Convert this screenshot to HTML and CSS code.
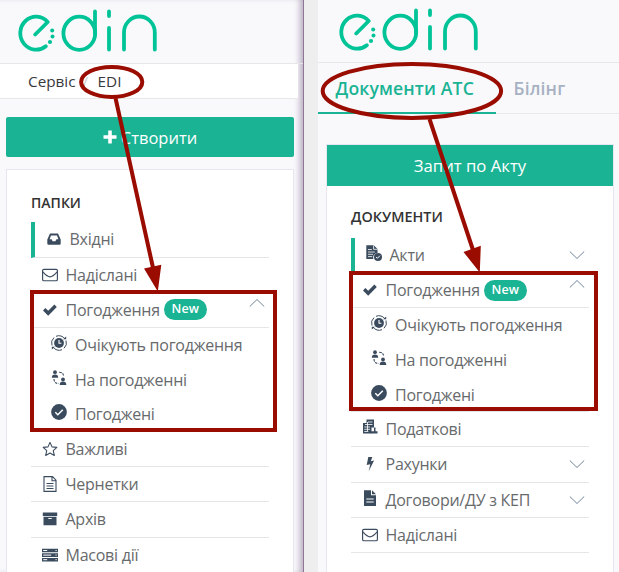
FILE: index.html
```html
<!DOCTYPE html>
<html lang="uk">
<head>
<meta charset="utf-8">
<title>EDIN</title>
<link rel="stylesheet" href="styles.css">
</head>
<body>
<svg class="defs" width="0" height="0">
  <symbol id="logo" viewBox="0 0 140 46">
    <g fill="none" stroke="#00c497" stroke-width="3.8" stroke-linecap="round" stroke-linejoin="round">
      <path d="M17.2 26.5 29.7 14A15.8 16.5 0 1 0 27.8 38.2"/>
      <ellipse cx="61.3" cy="25.3" rx="15.9" ry="16.6"/>
      <path d="M77 3.5V26M91 3.5V8M91 20V41.5M106 41.5V24.5A15.4 16 0 0 1 136.8 24.5V41.5"/>
    </g>
    <g fill="#00c497"><circle cx="34.2" cy="22.5" r="2"/><circle cx="34.5" cy="28.5" r="2"/><circle cx="32" cy="34" r="2.1"/></g>
  </symbol>
  <symbol id="inbox" viewBox="0 0 16 16"><path fill-rule="evenodd" d="M4 2.5h8l2.7 6v4q0 1.2-1.2 1.2h-11q-1.2 0-1.2-1.2v-4zM5 4.5 3.6 8.3h2l1 2h2.800l1-2h2L11 4.500z"/></symbol>
  <symbol id="mail" viewBox="0 0 16 16"><g fill="none" stroke="currentColor" stroke-width="1.15"><rect x=".6" y="2.3" width="14.8" height="11.4" rx="1.3"/><path d="M.8 4.8C3 7.200 5.500 9.800 8 9.800S13 7.200 15.200 4.800"/></g></symbol>
  <symbol id="check" viewBox="0 0 16 16"><path d="m1 8.400 2.400-2.400 2.800 2.800 6.200-6.200 2.400 2.400-8.600 8.700z"/></symbol>
  <symbol id="clock" viewBox="0 0 16 16"><circle cx="8" cy="8" r="4.900"/><path d="M8 5v3.200h2.400" fill="none" stroke="#fff" stroke-width="1.100"/><path d="M1 10.500A7.300 7.300 0 0 1 3 2.600M5 1.300A7.300 7.300 0 0 1 14 4M15 5.500A7.300 7.300 0 0 1 13 13.300M11 14.700A7.300 7.300 0 0 1 2 12" fill="none" stroke="currentColor"/><path d="M12 4.300h3.200V1.500zM4 11.700H.8v2.800z"/></symbol>
  <symbol id="people" viewBox="0 0 16 16"><circle cx="4" cy="2.200" r="1.900"/><path d="M.8 7.700q0-3.200 3.200-3.200t3.200 3.200z"/><circle cx="12" cy="9.400" r="1.900"/><path d="M8.700 15q0-3.400 3.300-3.400t3.300 3.400z"/><path d="M8.200 2.200q4.300 0 4.300 4M3 9q0 4.500 4.700 4.500" fill="none" stroke="currentColor" stroke-width="1.100" stroke-dasharray="2.500 1"/></symbol>
  <symbol id="done" viewBox="0 0 16 16"><circle cx="8" cy="8" r="7.900"/><path d="m4.300 8.300 2.500 2.400 5-5" fill="none" stroke="#fff" stroke-width="1.500"/></symbol>
  <symbol id="star" viewBox="0 0 16 16"><path d="m8 1.400 2 4.500 4.800.5-3.500 3.300 1 4.800L8 12.100l-4.300 2.400 1-4.800-3.500-3.300L6 5.900z" fill="none" stroke="currentColor" stroke-width="1.100" stroke-linejoin="round"/></symbol>
  <symbol id="draft" viewBox="0 0 16 16"><path d="M2 .6h8.500L14 4.200v11.200H2zM10 .8v4h4M4.500 7.500h7M4.500 10h7M4.500 12.500h7" fill="none" stroke="currentColor" stroke-width="1.100"/></symbol>
  <symbol id="archive" viewBox="0 0 16 16"><path fill-rule="evenodd" d="M.8 1.500h14.400v3.400H.8zM1.500 5.700h13v8.500h-13zM6.300 7h3.400v1H6.300z"/></symbol>
  <symbol id="stack" viewBox="0 0 16 16"><path d="M0 1.700h16v3.600H0zM0 6.300h16v3.600H0zM0 10.900h16v3.600H0z"/><path d="M1.200 3.500h4M1.200 8.100h8M1.200 12.700h4M13.500 3.500h1.200M13.500 8.100h1.200M13.500 12.700h1.200" stroke="#fff"/></symbol>
  <symbol id="act" viewBox="0 0 16 16"><path d="M.3.3h7.500l3.700 3.700V8a4.300 4.300 0 0 0-4 6H.3z"/><path d="M7.600.3v4h4M2 4.500h3.800M2 7h6.800M2 9.300h5M2 11.600h4.200" fill="none" stroke="#fff" stroke-width=".8"/><circle cx="12" cy="12" r="4"/><path d="m10.100 12 1.300 1.300 2.500-2.600" fill="none" stroke="#fff"/></symbol>
  <symbol id="tax" viewBox="0 0 16 16"><path d="M4.500.5H12v8H9.500v6H1V4h3.500z"/><path d="M6 3h4.500M3 5.500h7.500M2.300 8h5.700M2.300 10.300h5.700M2.300 12.500h4M5.500 3v9" stroke="#fff" stroke-width=".8"/><path d="M12 8.500h1.500v3.700h2v2.300H8.800v-2.300H12z"/></symbol>
  <symbol id="bolt" viewBox="0 0 16 16"><path d="M6.300 1h4L8.800 5.300l3.300-.8-5.400 10.700 1.600-7L4.700 9z"/></symbol>
  <symbol id="file" viewBox="0 0 16 16"><path d="M2 .2h7v5.100h5V16H2zM10 .2v4h4z"/><path d="M4.300 9h7.400M4.300 12h7.400" stroke="#fff" stroke-width="1.200"/></symbol>
  <symbol id="up" viewBox="0 0 16 10"><path d="M.8 8.500 8 1.500l7.200 7" fill="none" stroke="currentColor"/></symbol>
  <symbol id="down" viewBox="0 0 16 10"><path d="m.8 1.500 7.200 7 7.200-7" fill="none" stroke="currentColor"/></symbol>
</svg>
<main class="screen">
  <section class="pane pane-left">
    <header class="brand"><svg class="logo"><use href="#logo"/></svg></header>
    <nav class="crumbs"><span>Сервіс</span><span class="slash">/</span><span>EDI</span></nav>
    <button class="create"><svg class="plus" viewBox="0 0 14 14"><path d="M5.200.5h3.600v4.700h4.700v3.600H8.800v4.700H5.200V8.800H.5V5.200h4.700z"/></svg>Створити</button>
    <div class="card">
      <h2>ПАПКИ</h2>
      <ul class="menu">
        <li class="active"><svg class="icon"><use href="#inbox"/></svg>Вхідні</li>
        <li><svg class="icon"><use href="#mail"/></svg>Надіслані</li>
        <li><svg class="icon"><use href="#check"/></svg>Погодження<span class="badge">New</span><svg class="chev raised"><use href="#up"/></svg></li>
        <li class="group">
          <div><svg class="icon"><use href="#clock"/></svg>Очікують погодження</div>
          <div><svg class="icon"><use href="#people"/></svg>На погодженні</div>
          <div><svg class="icon"><use href="#done"/></svg>Погоджені</div>
        </li>
        <li><svg class="icon"><use href="#star"/></svg>Важливі</li>
        <li><svg class="icon"><use href="#draft"/></svg>Чернетки</li>
        <li><svg class="icon"><use href="#archive"/></svg>Архів</li>
        <li><svg class="icon"><use href="#stack"/></svg>Масові дії</li>
      </ul>
    </div>
  </section>
  <section class="pane pane-right">
    <header class="brand"><svg class="logo"><use href="#logo"/></svg></header>
    <nav class="tabs"><span class="tab current">Документи АТС</span><span class="tab">Білінг</span></nav>
    <div class="card">
      <button class="request">Запит по Акту</button>
      <h2>ДОКУМЕНТИ</h2>
      <ul class="menu">
        <li class="active"><svg class="icon lifted"><use href="#act"/></svg>Акти<svg class="chev"><use href="#down"/></svg></li>
        <li><svg class="icon"><use href="#check"/></svg>Погодження<span class="badge">New</span><svg class="chev raised"><use href="#up"/></svg></li>
        <li class="group">
          <div><svg class="icon"><use href="#clock"/></svg>Очікують погодження</div>
          <div><svg class="icon"><use href="#people"/></svg>На погодженні</div>
          <div><svg class="icon"><use href="#done"/></svg>Погоджені</div>
        </li>
        <li><svg class="icon lifted"><use href="#tax"/></svg>Податкові</li>
        <li><svg class="icon"><use href="#bolt"/></svg>Рахунки<svg class="chev"><use href="#down"/></svg></li>
        <li><svg class="icon lifted"><use href="#file"/></svg>Договори/ДУ з КЕП<svg class="chev"><use href="#down"/></svg></li>
        <li><svg class="icon"><use href="#mail"/></svg>Надіслані</li>
      </ul>
    </div>
  </section>
  <svg class="marks" viewBox="0 0 619 572">
    <g fill="none" stroke="#9a0b00" stroke-width="4">
      <ellipse cx="111.700" cy="81.900" rx="30.600" ry="15"/>
      <ellipse cx="411.900" cy="90.900" rx="89.200" ry="27"/>
      <path d="M32 292H275V430H32zM351 273H596V409H351zM115.500 98 153.500 270M429.500 119 473 250"/>
    </g>
    <path fill="#9a0b00" d="m144 268.500 17.300-3.700-3.500 26.700zM463.500 252l17.300-6.200-1 26.700z"/>
  </svg>
</main>
</body>
</html>
```
FILE: styles.css
```css
* { box-sizing: border-box; }
body { margin: 0; font: 16px/24px "Open Sans", "Noto Sans", sans-serif; color: #676a6c; background: #eee; }
.defs { position: absolute; }
.screen { position: relative; display: flex; gap: 14px; width: 619px; height: 572px; overflow: hidden; }
.pane { background: #f9f9fc; height: 572px; overflow: hidden; }
.pane-left { width: 304px; border-right: 1px solid #8f7697; box-shadow: inset -6px 0 6px -3px #b9adc0; }
.pane-right { flex: 1; }
.brand { height: 64px; padding: 8px 0 0 18px; border-bottom: 1px solid #e7e7ea; }
.pane-right .brand { height: 63px; padding: 7px 0 0 20.5px; }
.logo { display: block; width: 140px; height: 46px; }
.crumbs { display: flex; height: 35px; padding-left: 28px; align-items: center; background: #fff; border-bottom: 1px solid #e7e7ea; color: #373a3c; font-size: 15.3px; margin-right: 5px; }
.slash { width: 22px; padding-left: 7px; color: #ccc; }
.tabs { display: flex; height: 51px; border-bottom: 1px solid #e7eaec; font-size: 17.6px; letter-spacing: .15px; font-weight: 600; color: #a7b1c2; }
.tab { padding: 13px 17.5px 0; }
.tab.current { width: 178px; color: #1ab394; border-bottom: 2px solid #1ab394; height: 51px; white-space: nowrap; }
button { font: inherit; color: #fff; background: #1ab394; border: 0; padding: 0; display: flex; align-items: center; justify-content: center; }
.create { width: 288px; height: 40px; margin: 18px 0 0 6px; gap: 4px; border-radius: 2px; padding-top: 2px; font-size: 16.500px; }
.plus { width: 14px; height: 14px; fill: #fff; margin-top: -2px; }
.card { height: 500px; background: #fff; border: 1px solid #e7e7f2; }
.pane-left .card { width: 288px; margin: 12px 0 0 6px; padding: 22px 16px 0 24px; }
.pane-right .card { width: 288px; margin: 30px 0 0 8px; padding: 0 23px 0 24px; }
.request { width: 286px; height: 41px; margin: 0 0 20.400px -24px; font-size: 16.700px; }
h2 { margin: 0; height: 30.4px; font-size: 14px; line-height: 22px; font-weight: 600; color: #333; }
.pane-right h2 { height: 31.400px; font-size: 14.400px; }
.menu { list-style: none; margin: 0; padding: 0; width: 238px; letter-spacing: -.25px; }
.menu li { height: 35.2px; border-bottom: 1px solid #e4e6e8; display: flex; align-items: center; padding-left: 10.500px; white-space: nowrap; }
.menu li.active { border-left: 4px solid #1ab394; }
.menu li.group { display: block; height: 104px; padding-left: 20px; }
.group div { height: 34.600px; display: flex; align-items: center; }
.icon { width: 16px; height: 16px; fill: #3b4b5e; color: #3b4b5e; margin-right: 8px; flex: none; }
.lifted, .group .icon { position: relative; top: -2px; }
.badge { margin-left: 4px; width: 43px; height: 21px; border-radius: 11px; background: #1ab394; color: #fff; font-weight: 600; font-size: 12.500px; letter-spacing: .1px; line-height: 20px; text-align: center; }
.chev { width: 16px; height: 10px; margin: 0 4px 0 auto; color: #73849a; }
.raised { margin-bottom: 13px; }
.marks { position: absolute; inset: 0; width: 619px; height: 572px; }
```
